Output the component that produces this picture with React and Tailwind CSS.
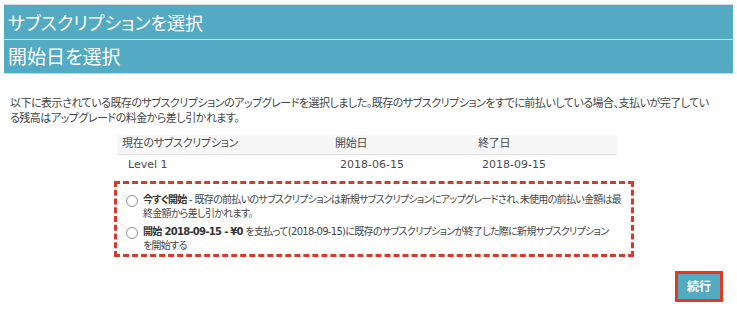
import React from "react";

// ── Data ───────────────────────────────────────────────────────────────────
const current = { name: "Level 1", start: "2018-06-15", end: "2018-09-15" };

const jp = "font-['DejaVu_Sans','Noto_Sans_CJK_JP',sans-serif] [font-feature-settings:'palt']";

const Radio = () => (
  <span className="mt-[2px] w-[12px] h-[12px] shrink-0 rounded-full border border-[#8c8c8c] bg-white" />
);

// ── Main Component ─────────────────────────────────────────────────────────
const App = () => {
  return (
    <div className={`w-[737px] h-[313px] bg-white overflow-hidden px-1 pt-1 ${jp}`}>
      {/* Header bars */}
      <div className="border-t border-[#cfd8db]">
        <div className="h-[34px] bg-[#53aac3] flex items-center pl-1 text-white text-[18px] font-['Noto_Sans_CJK_JP',sans-serif]">
          サブスクリプションを選択
        </div>
        <div className="h-px bg-[#c2e2eb]" />
        <div className="h-[33px] bg-[#53aac3] flex items-center pl-1 text-white text-[19px] font-['Noto_Sans_CJK_JP',sans-serif]">
          開始日を選択
        </div>
        <div className="h-px bg-[#b5dde8]" />
      </div>

      {/* Description */}
      <p className="mt-[22px] pl-[6px] pr-[16px] text-[11px] leading-[15px] tracking-[-0.5px] text-[#444]">
        以下に表示されている既存のサブスクリプションのアップグレードを選択しました。既存のサブスクリプションをすでに前払いしている場合、支払いが完了している残高はアップグレードの料金から差し引かれます。
      </p>

      {/* Current subscription table */}
      <div className="ml-[113px] mt-[9px] w-[500px] text-[11px] text-[#4a4a4a]">
        <div className="grid grid-cols-[213px_143px_144px] h-[20px] items-center bg-[#f7f7f7] border-b border-[#e2e2e2] tracking-[-0.3px]">
          <span className="pl-[5px]">現在のサブスクリプション</span>
          <span className="pl-[5px]">開始日</span>
          <span className="pl-[5px]">終了日</span>
        </div>
        <div className="grid grid-cols-[213px_143px_144px] h-[21px] items-center">
          <span className="pl-[11px]">{current.name}</span>
          <span className="pl-[10px]">{current.start}</span>
          <span className="pl-[9px]">{current.end}</span>
        </div>
      </div>

      {/* Options */}
      <div className="ml-[110px] mt-[5px] w-[520px] h-[76px] border-[3px] border-dashed border-[#d9382b] pl-[9px] pr-[4px] pt-[9px] flex flex-col gap-[4px] text-[10px] leading-[14px] tracking-[-0.7px] text-[#444]">
        <label className="flex items-start gap-[5px]">
          <Radio />
          <span>
            <b className="text-[#333]">今すぐ開始</b> - 既存の前払いのサブスクリプションは新規サブスクリプションにアップグレードされ、未使用の前払い金額は最終金額から差し引かれます。
          </span>
        </label>
        <label className="flex items-start gap-[5px]">
          <Radio />
          <span>
            <b className="text-[#333]">開始 2018-09-15 - ¥0</b> を支払って(2018-09-15)に既存のサブスクリプションが終了した際に新規サブスクリプション
            <br />
            を開始する
          </span>
        </label>
      </div>

      {/* Continue */}
      <div className="flex justify-end pr-[10px] mt-[14px]">
        <button className="w-[48px] h-[31px] border-[3px] border-[#e03a24] bg-[#53aac3] text-white text-[12px] font-bold">
          続行
        </button>
      </div>
    </div>
  );
};

export default App;
